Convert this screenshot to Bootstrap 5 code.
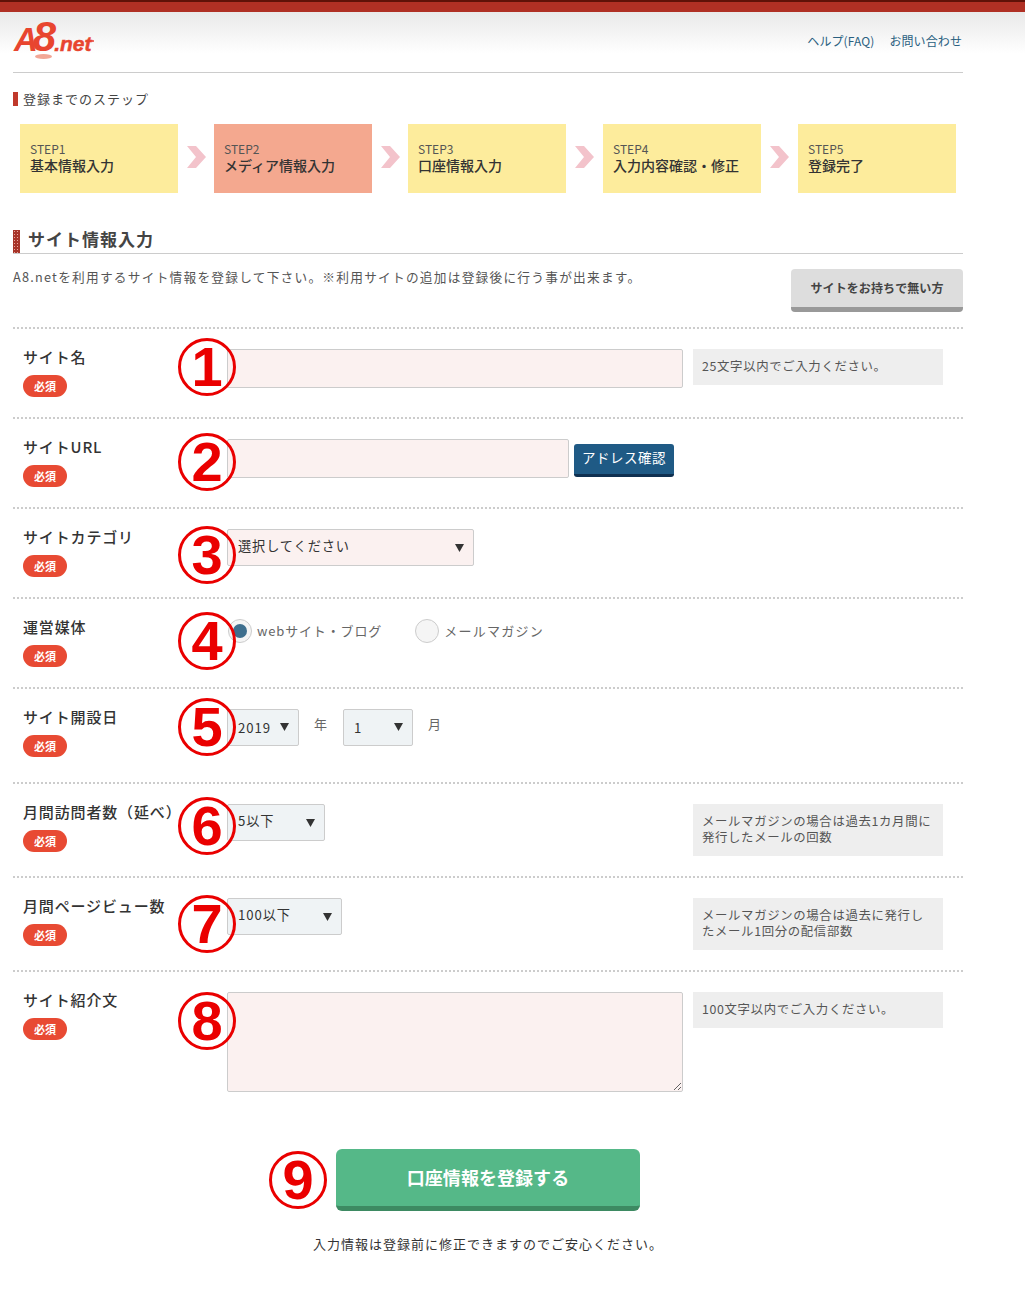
<!DOCTYPE html>
<html lang="ja">
<head>
<meta charset="utf-8">
<title>A8.net</title>
<link href="https://cdn.jsdelivr.net/npm/bootstrap@5.3.0/dist/css/bootstrap.min.css" rel="stylesheet">
<style>
body{font-family:"Noto Sans CJK JP","Noto Sans",sans-serif;color:#333;font-size:13px;background:#fff;min-height:1298px}
.topbar{height:12px;background:#b03024;border-top:2px solid #5f1208}
.headfade{position:absolute;left:0;right:0;top:12px;height:42px;background:linear-gradient(#e9e9e9,#fff);z-index:-1}
.sheet{width:950px;margin-left:13px}
.headrow{height:61px;border-bottom:1px solid #ccc}
.logo{position:relative;display:block;width:84px;height:44px;margin:4px 0 0 1px;color:#e8452f;font-family:"Liberation Sans",sans-serif;font-style:italic;font-weight:700;line-height:1;white-space:nowrap;text-decoration:none}
.logo:hover{color:#e8452f}
.logo-a{font-size:33px;letter-spacing:-5px}
.logo-8{font-size:42px;letter-spacing:-2px}
.logo-net{font-size:21px;-webkit-text-stroke:.5px #e8452f}
.logo-oval{position:absolute;left:21px;top:38px;width:17px;height:5px;border-radius:50%;background:#f2a796}
.logo-dot{position:absolute;left:78px;top:24px;width:2px;height:2px;border-radius:50%;background:#e8452f}
.helpnav a{font-size:12px;color:#2a6080;text-decoration:none;letter-spacing:.1px}
.helpnav{gap:15px;margin-top:20px;margin-right:1px}
.steps-h{font-size:13px;line-height:14px;border-left:5px solid #c0392b;padding-left:5px;margin-top:19px;letter-spacing:1px;color:#444}
.steps{margin:18px 0 0 7px;width:936px}
.stepbox{width:158px;height:69px;background:#fdec9c;padding:17px 10px 0;line-height:1.2;color:#333}
.stepbox.now{background:#f4a88f}
.stepno{font-size:12px;display:block;line-height:16px;color:#555}
.stepname{font-size:14px;display:block;line-height:16px;font-weight:500}
.steparrow{width:36px;flex:none;display:flex;justify-content:center;padding-top:22px}
.steparrow.wide{width:37px}
.sec-h{margin-top:37px;height:24px;border-bottom:1px solid #ccc;font-size:17px;font-weight:700;line-height:17px;letter-spacing:1px;color:#444;display:flex;gap:8px;align-items:flex-start}
.sec-bar{width:7px;height:23px;flex:none;background:#a8352a radial-gradient(#e8a8a0 35%,transparent 40%) 0 0/3px 3px}
.introtext{font-size:12.7px;letter-spacing:1.24px;color:#555;padding-top:13px;margin:0}
.btn-nosite{width:172px;height:43px;margin-top:15px;background:#ddd;border:0;border-bottom:5px solid #999;border-radius:4px;font-size:12px;font-weight:700;color:#444;padding:0;letter-spacing:.1px}
.btn-nosite:hover{background:#ddd;color:#444;border-bottom-color:#999}
.introrow{height:73px}
.frow{position:relative;display:flex;border-top:2px dotted #ccc;padding-top:20px;height:90px}
.frow.h95{height:95px}
.frow.h94{height:94px}
.frow.hlast{height:179px}
.labelcol{width:214px;flex:none;padding-left:10px}
.flabel{display:block;font-size:15px;line-height:20px;font-weight:500;color:#333;margin:-2px 0 8px 0;letter-spacing:.85px;white-space:nowrap}
.reqtag{display:block;width:44px;height:22px;border-radius:11px;background:#e84a33;color:#fff;font-size:11px;font-weight:700;line-height:22px;text-align:center}
.ctrlcol{width:466px;flex:none;display:flex;align-items:flex-start}
.notecol{width:250px;flex:none;background:#eee;color:#555;font-size:12.4px;line-height:16px;letter-spacing:.65px;padding:9px 9px 11px}
.notecol.tall{padding:9px 10px 11px 9px}
.form-control.pinkfield,.form-select.pinkfield{background-color:#fbf1f0}
.form-control.inp{height:39px;border:1px solid #ccc;border-radius:2px;padding:0 10px}
.form-control.inp.w456{width:456px}
.form-control.inp.w342{width:342px}
.form-control.area{width:456px;height:100px;border:1px solid #ccc;border-radius:2px}
.form-select.pick{height:37px;border:1px solid #ccc;border-radius:2px;font-size:13.2px;letter-spacing:.9px;color:#333;padding:0 10px 3px;background-size:9px 8px;background-position:right 9px center;background-image:url("data:image/svg+xml,%3Csvg xmlns='http://www.w3.org/2000/svg' viewBox='0 0 9 8'%3E%3Cpath fill='%23333' d='M0 0h9L4.5 8z'/%3E%3C/svg%3E")}
.form-select.pick.datepick{padding-bottom:0;background-position:right 9px top 13px}
.form-select.bluefield{background-color:#eff3f5}
.w247{width:247px}.w72{width:72px}.w70{width:70px}.w98{width:98px}.w115{width:115px}
.btn-addr{width:100px;height:33px;margin:5px 0 0 5px;padding:0 0 3px;background:#1f5a85;border:0;border-bottom:3px solid #0f3050;border-radius:3px;color:#fff;font-size:13.5px;letter-spacing:.5px}
.btn-addr:hover{background:#1f5a85;color:#fff;border-bottom-color:#0f3050}
.radiogroup{display:flex;align-items:center;color:#666;font-size:13px;letter-spacing:.85px;margin-top:0;line-height:24px}
.radiodisc{width:24px;height:24px;border-radius:50%;border:1px solid #ccc;background:#f5f5f5;flex:none;margin:0 5px 0 1px;display:flex;align-items:center;justify-content:center}
.radiodisc.on::after{content:"";width:14px;height:14px;border-radius:50%;background:#3e6f8e}
.mailtext{letter-spacing:1.25px}
.unit{font-size:13px;color:#666;margin:6px 0 0 15px;line-height:18px}
.unit.y{width:29px;flex:none;margin-left:15px}
.pin{position:absolute;left:165px;width:58px;height:58px;border:3px solid #ea0000;border-radius:50%;color:#ea0000;font:700 56px/52px "Liberation Sans",sans-serif;text-align:center;pointer-events:none}
.p8{top:9px}.p13{top:14px}.p16{top:17px}.p12{top:13px}.p19{top:20px}
.donebox{position:relative;height:62px}
.pin.nine{left:256px;top:2px}
.btn-done{display:block;margin-left:323px;width:304px;height:62px;background:#55b888;border:0;border-bottom:5px solid #3d8a62;border-radius:6px;color:#fff;font-size:18px;font-weight:700;padding:0;letter-spacing:.05px}
.btn-done:hover{background:#55b888;color:#fff;border-bottom-color:#3d8a62}
.donenote{margin:23px 0 0 300px;font-size:13px;line-height:20px;letter-spacing:1px;color:#333;white-space:nowrap}
</style>
</head>
<body class="position-relative">
<div class="topbar"></div>
<div class="headfade"></div>
<div class="sheet">
  <div class="headrow d-flex justify-content-between align-items-start">
    <a class="logo" href="#"><span class="logo-a">A</span><span class="logo-8">8</span><span class="logo-net">.net</span><span class="logo-oval"></span><span class="logo-dot"></span></a>
    <nav class="helpnav d-flex"><a href="#">ヘルプ(FAQ)</a><a href="#">お問い合わせ</a></nav>
  </div>

  <div class="steps-h">登録までのステップ</div>
  <div class="steps d-flex">
    <div class="stepbox"><span class="stepno">STEP1</span><span class="stepname">基本情報入力</span></div>
    <div class="steparrow"><svg width="19" height="22" viewBox="0 0 19 22"><path fill="#f3c3cb" d="M0 0h9l10 11L9 22H0l9-11z"/></svg></div>
    <div class="stepbox now"><span class="stepno">STEP2</span><span class="stepname">メディア情報入力</span></div>
    <div class="steparrow"><svg width="19" height="22" viewBox="0 0 19 22"><path fill="#f3c3cb" d="M0 0h9l10 11L9 22H0l9-11z"/></svg></div>
    <div class="stepbox"><span class="stepno">STEP3</span><span class="stepname">口座情報入力</span></div>
    <div class="steparrow wide"><svg width="19" height="22" viewBox="0 0 19 22"><path fill="#f3c3cb" d="M0 0h9l10 11L9 22H0l9-11z"/></svg></div>
    <div class="stepbox"><span class="stepno">STEP4</span><span class="stepname">入力内容確認・修正</span></div>
    <div class="steparrow wide"><svg width="19" height="22" viewBox="0 0 19 22"><path fill="#f3c3cb" d="M0 0h9l10 11L9 22H0l9-11z"/></svg></div>
    <div class="stepbox"><span class="stepno">STEP5</span><span class="stepname">登録完了</span></div>
  </div>

  <div class="sec-h"><span class="sec-bar"></span><span>サイト情報入力</span></div>
  <div class="introrow d-flex justify-content-between align-items-start">
    <p class="introtext">A8.netを利用するサイト情報を登録して下さい。※利用サイトの追加は登録後に行う事が出来ます。</p>
    <button type="button" class="btn btn-nosite">サイトをお持ちで無い方</button>
  </div>

  <div class="frow">
    <div class="labelcol"><span class="flabel">サイト名</span><span class="reqtag">必須</span></div>
    <div class="ctrlcol"><input class="form-control inp w456 pinkfield" type="text"></div>
    <div class="notecol align-self-start">25文字以内でご入力ください。</div>
    <span class="pin p8">1</span>
  </div>
  <div class="frow">
    <div class="labelcol"><span class="flabel">サイトURL</span><span class="reqtag">必須</span></div>
    <div class="ctrlcol"><input class="form-control inp w342 pinkfield" type="text"><button type="button" class="btn btn-addr">アドレス確認</button></div>
    <span class="pin p13">2</span>
  </div>
  <div class="frow">
    <div class="labelcol"><span class="flabel">サイトカテゴリ</span><span class="reqtag">必須</span></div>
    <div class="ctrlcol"><select class="form-select pick pinkfield w247"><option>選択してください</option></select></div>
    <span class="pin p16">3</span>
  </div>
  <div class="frow">
    <div class="labelcol"><span class="flabel">運営媒体</span><span class="reqtag">必須</span></div>
    <div class="ctrlcol">
      <div class="radiogroup"><span class="radiodisc on"></span><span class="me-4 pe-2">webサイト・ブログ</span><span class="radiodisc"></span><span class="mailtext">メールマガジン</span></div>
    </div>
    <span class="pin p12">4</span>
  </div>
  <div class="frow h95">
    <div class="labelcol"><span class="flabel">サイト開設日</span><span class="reqtag">必須</span></div>
    <div class="ctrlcol">
      <select class="form-select pick datepick bluefield w72"><option>2019</option></select>
      <span class="unit y">年</span>
      <select class="form-select pick datepick bluefield w70"><option>1</option></select>
      <span class="unit">月</span>
    </div>
    <span class="pin p8">5</span>
  </div>
  <div class="frow h94">
    <div class="labelcol"><span class="flabel">月間訪問者数（延べ）</span><span class="reqtag">必須</span></div>
    <div class="ctrlcol"><select class="form-select pick bluefield w98"><option>5以下</option></select></div>
    <div class="notecol tall align-self-start">メールマガジンの場合は過去1カ月間に発行したメールの回数</div>
    <span class="pin p12">6</span>
  </div>
  <div class="frow h94">
    <div class="labelcol"><span class="flabel">月間ページビュー数</span><span class="reqtag">必須</span></div>
    <div class="ctrlcol"><select class="form-select pick bluefield w115"><option>100以下</option></select></div>
    <div class="notecol tall align-self-start">メールマガジンの場合は過去に発行したメール1回分の配信部数</div>
    <span class="pin p16">7</span>
  </div>
  <div class="frow hlast">
    <div class="labelcol"><span class="flabel">サイト紹介文</span><span class="reqtag">必須</span></div>
    <div class="ctrlcol"><textarea class="form-control area pinkfield"></textarea></div>
    <div class="notecol align-self-start">100文字以内でご入力ください。</div>
    <span class="pin p19">8</span>
  </div>

  <div class="donebox">
    <span class="pin nine">9</span>
    <button type="button" class="btn btn-done">口座情報を登録する</button>
  </div>
  <p class="donenote">入力情報は登録前に修正できますのでご安心ください。</p>
</div>
<script src="https://cdn.jsdelivr.net/npm/bootstrap@5.3.0/dist/js/bootstrap.bundle.min.js"></script>
</body>
</html>
